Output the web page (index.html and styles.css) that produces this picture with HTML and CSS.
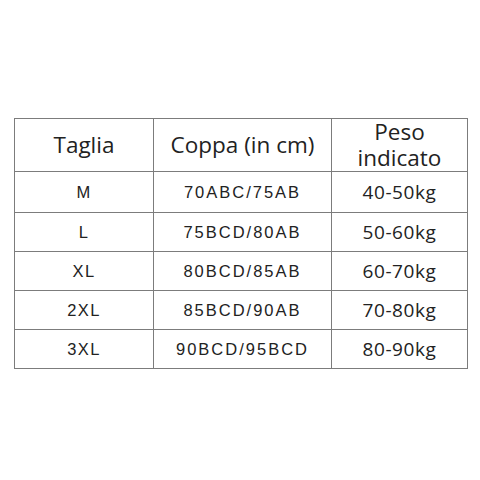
FILE: index.html
```html
<!DOCTYPE html>
<html>
<head>
<meta charset="utf-8">
<link rel="stylesheet" href="styles.css">
</head>
<body>
<table class="size-table">
  <colgroup>
    <col class="c1"><col class="c2"><col class="c3">
  </colgroup>
  <tr class="head">
    <th>Taglia</th>
    <th>Coppa (in cm)</th>
    <th class="peso"><span class="ln">Peso</span><span class="ln">indicato</span></th>
  </tr>
  <tr class="r1"><td class="sz">M</td><td class="cup">70ABC/75AB</td><td class="kg">40-50kg</td></tr>
  <tr><td class="sz">L</td><td class="cup">75BCD/80AB</td><td class="kg">50-60kg</td></tr>
  <tr><td class="sz">XL</td><td class="cup">80BCD/85AB</td><td class="kg">60-70kg</td></tr>
  <tr><td class="sz">2XL</td><td class="cup">85BCD/90AB</td><td class="kg">70-80kg</td></tr>
  <tr><td class="sz">3XL</td><td class="cup">90BCD/95BCD</td><td class="kg">80-90kg</td></tr>
</table>
</body>
</html>
```
FILE: styles.css
```css
html, body {
  margin: 0;
  padding: 0;
  background: #ffffff;
}
body {
  padding: 118px 0 0 14px;
}
.size-table {
  border-collapse: collapse;
  table-layout: fixed;
  width: 453px;
  color: #222222;
}
.c1 { width: 139px; }
.c2 { width: 178px; }
.c3 { width: 136px; }
.size-table th,
.size-table td {
  border: 1.5px solid #7c7c7c;
  text-align: center;
  padding: 0;
}
.head th {
  height: 52px;
  font-family: "Open Sans", sans-serif;
  font-weight: 400;
  font-size: 22.5px;
  line-height: 26px;
}
.ln {
  display: block;
  height: 26px;
  line-height: 26px;
}
.size-table td {
  height: 38px;
}
.r1 td {
  height: 40px;
}
.sz, .cup {
  font-family: "Liberation Sans", Arial, sans-serif;
  font-size: 16.5px;
  letter-spacing: 1.4px;
}
.cup {
  letter-spacing: 2px;
  padding-left: 4px;
}
.kg {
  font-family: "Open Sans", sans-serif;
  font-size: 19px;
  letter-spacing: 0.6px;
  padding-left: 6px;
}
```
